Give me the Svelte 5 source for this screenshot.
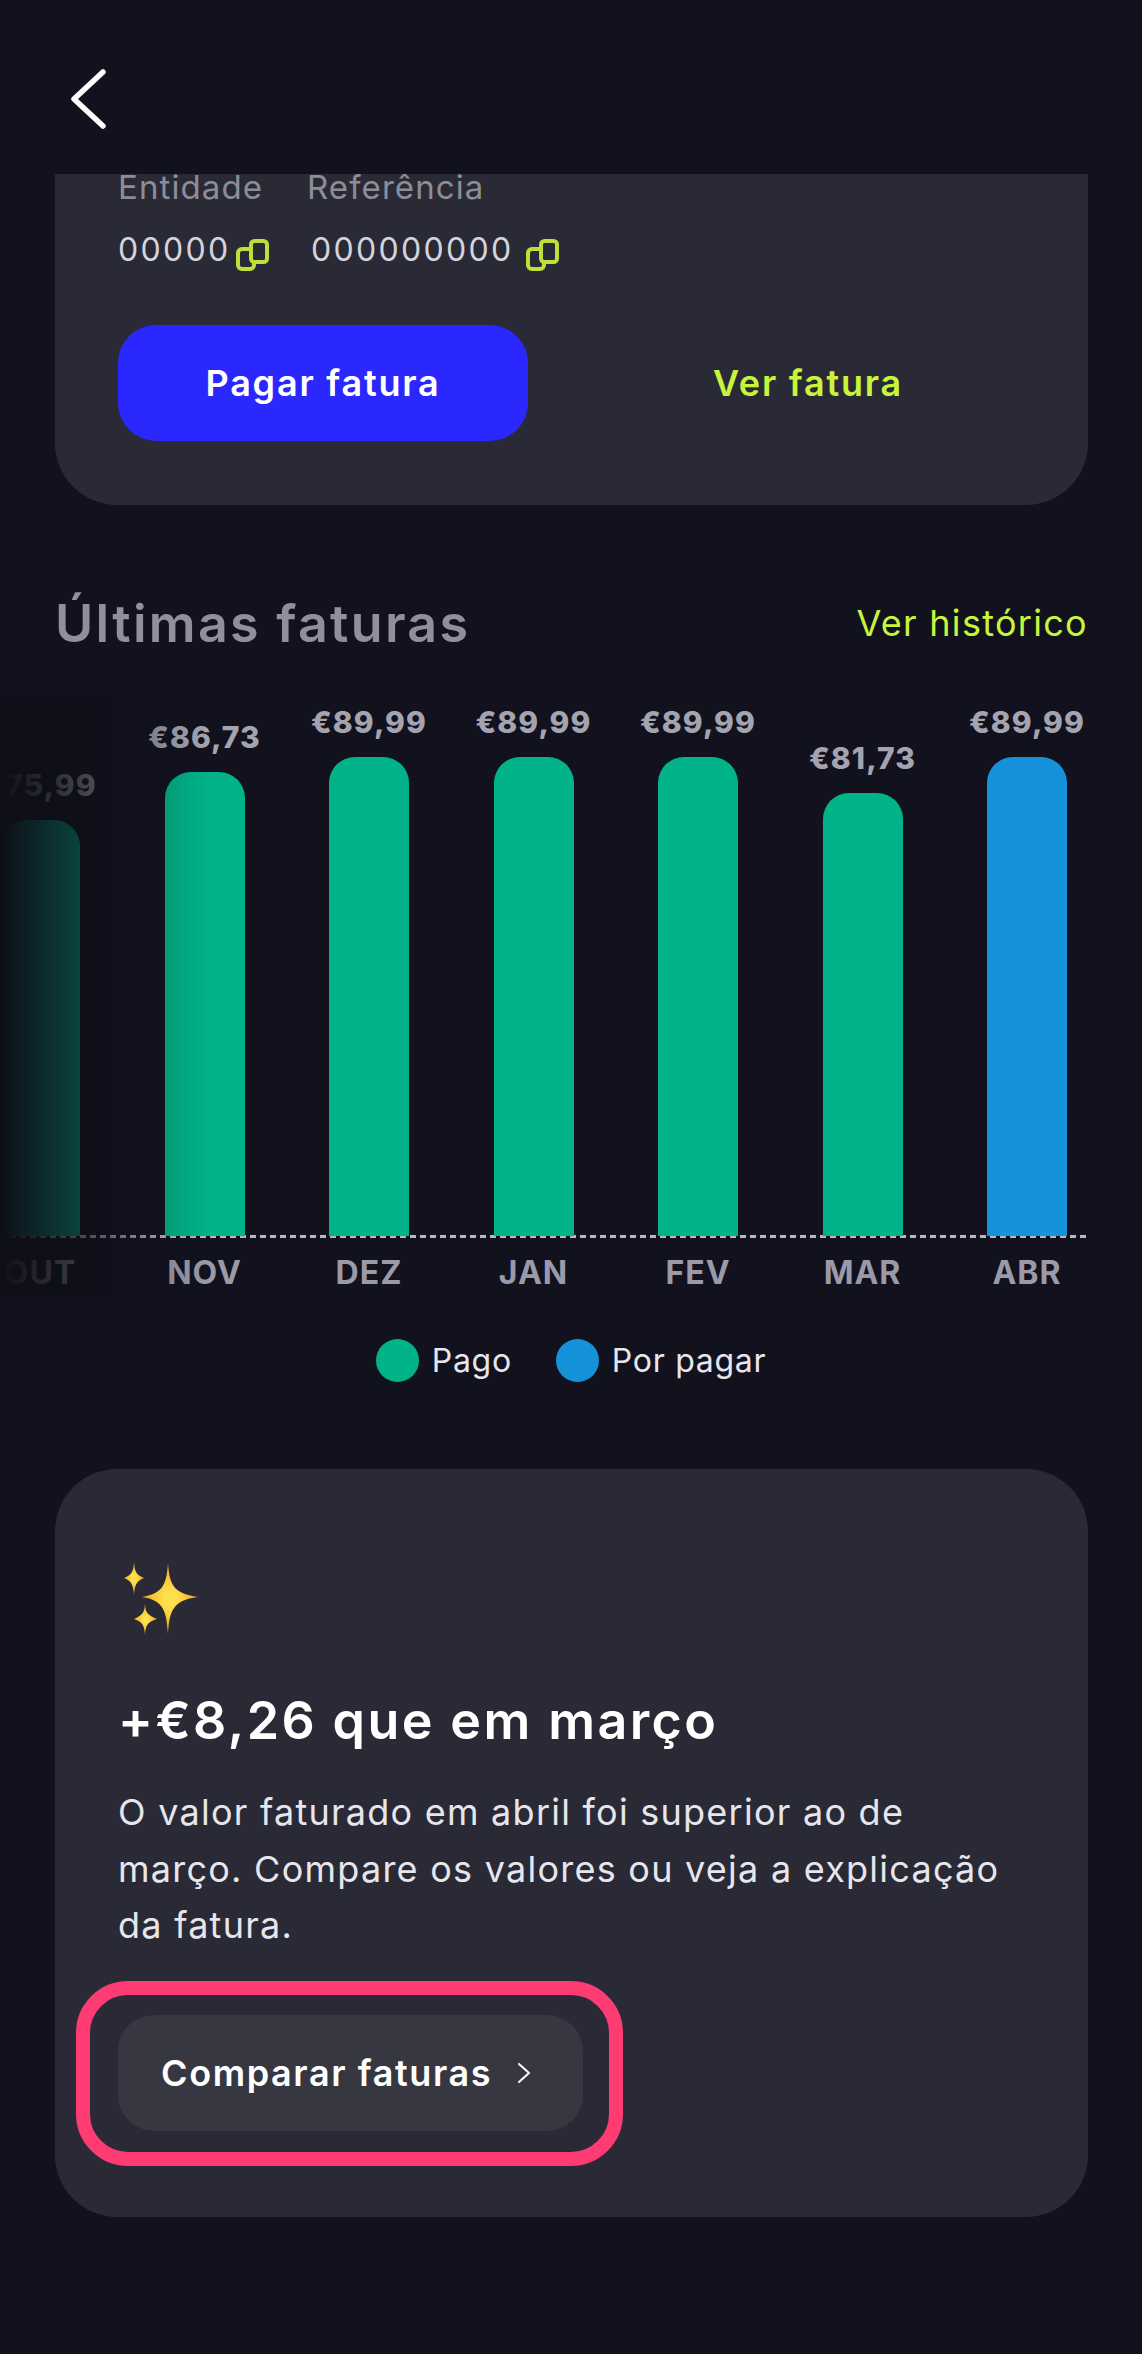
<script>
  const bars = [
    { month: "OUT", value: "€75,99", height: 416, kind: "paid" },
    { month: "NOV", value: "€86,73", height: 464, kind: "paid" },
    { month: "DEZ", value: "€89,99", height: 479, kind: "paid" },
    { month: "JAN", value: "€89,99", height: 479, kind: "paid" },
    { month: "FEV", value: "€89,99", height: 479, kind: "paid" },
    { month: "MAR", value: "€81,73", height: 443, kind: "paid" },
    { month: "ABR", value: "€89,99", height: 479, kind: "due" },
  ];

  const payment = [
    { label: "Entidade", value: "00000" },
    { label: "Referência", value: "000000000" },
  ];
</script>

<div class="page">
  <header class="top">
    <svg class="back" viewBox="0 0 36 60" width="36" height="60" fill="none">
      <path d="M33 3 4 30l29 27" stroke="#fff" stroke-width="5.5" stroke-linecap="round" stroke-linejoin="round" />
    </svg>
  </header>

  <section class="card pay">
    <div class="refs">
      {#each payment as item}
        <div class="ref">
          <span class="ref-label">{item.label}</span>
          <span class="ref-value">
            {item.value}
            <svg viewBox="0 0 33 32" width="33" height="32" fill="none" stroke="#bfe03a" stroke-width="4">
              <rect x="15" y="2" width="16" height="21" rx="3.5" />
              <path d="M15 10H6a4 4 0 0 0-4 4v12a4 4 0 0 0 4 4h8a4 4 0 0 0 4-4v-3" />
            </svg>
          </span>
        </div>
      {/each}
    </div>
    <div class="actions">
      <button class="primary">Pagar fatura</button>
      <button class="ghost">Ver fatura</button>
    </div>
  </section>

  <div class="section-head">
    <h2>Últimas faturas</h2>
    <span class="link">Ver histórico</span>
  </div>

  <section class="chart">
    <div class="bars">
      {#each bars as bar}
        <div class="col">
          <span class="amount">{bar.value}</span>
          <div class="bar {bar.kind}" style="height: {bar.height}px"></div>
        </div>
      {/each}
    </div>
    <div class="axis"></div>
    <div class="months">
      {#each bars as bar}
        <span class="month">{bar.month}</span>
      {/each}
    </div>
    <div class="fade"></div>
  </section>

  <div class="legend">
    <span class="dot paid"></span>
    <span class="legend-text">Pago</span>
    <span class="dot due"></span>
    <span class="legend-text">Por pagar</span>
  </div>

  <section class="card insight">
    <svg class="sparkles" viewBox="0 0 76 74" width="76" height="74">
      <defs>
        <radialGradient id="spark">
          <stop offset="0.2" stop-color="#ffe14d" />
          <stop offset="1" stop-color="#f5a81c" />
        </radialGradient>
      </defs>
      <path fill="url(#spark)" d="M45 1c1.500 20 4 30.500 30 34C49 38 46.500 50 45 72 43.500 50 41 38 19 35 41 31.500 43.500 21 45 1Z" />
      <path fill="url(#spark)" d="M11 0c.6 9 2 13 10 16-8 3-9.400 8-10 17-.6-9-2-14-10-17 8-3 9.400-7 10-16Z" />
      <path fill="url(#spark)" d="M22 42c.6 8 2 11 12 15-10 3-11.400 7-12 16-.6-9-2-13-11-16 9-4 10.400-7 11-15Z" />
    </svg>
    <h3>+€8,26 que em março</h3>
    <p>O valor faturado em abril foi superior ao de março. Compare os valores ou veja a explicação da fatura.</p>
    <div class="cta-wrap">
      <button class="cta">
        Comparar faturas
        <svg viewBox="0 0 14 22" width="14" height="22" fill="none">
          <path d="m2 2 10 9-10 9" stroke="#fff" stroke-width="2" stroke-linecap="round" stroke-linejoin="round" />
        </svg>
      </button>
      <div class="highlight"></div>
    </div>
  </section>
</div>

<style>
  :global(body) {
    margin: 0;
    background: #12121f;
  }

  .page {
    width: 1142px;
    height: 2354px;
    overflow: hidden;
    background: #12121f;
    font-family: Inter, "Liberation Sans", sans-serif;
    color: #fff;
  }

  .top {
    height: 174px;
    padding: 69px 0 0 70px;
    box-sizing: border-box;
  }

  .back {
    display: block;
  }

  .card {
    margin: 0 54px 0 55px;
    background: #2a2a36;
  }

  .pay {
    height: 331px;
    box-sizing: border-box;
    padding: 0 0 0 63px;
    border-radius: 0 0 62px 62px;
  }

  .refs {
    display: flex;
    gap: 46px;
  }

  .ref {
    display: flex;
    flex-direction: column;
    width: 143px;
  }

  .ref:last-child .ref-value {
    margin-left: 4px;
    gap: 13px;
  }

  .ref-label {
    font-size: 33px;
    line-height: 26px;
    height: 26px;
    letter-spacing: 1.100px;
    white-space: nowrap;
    color: #8d8d98;
  }

  .ref-value {
    display: flex;
    align-items: flex-start;
    gap: 6px;
    margin-top: 31px;
    font-size: 32px;
    line-height: 38px;
    letter-spacing: 2.300px;
    color: #d4d4dc;
  }

  .ref-value svg {
    margin-top: 8px;
    flex: none;
  }

  .actions {
    display: flex;
    align-items: center;
    margin-top: 54px;
  }

  button {
    font-family: inherit;
    border: none;
    cursor: pointer;
  }

  .primary {
    width: 410px;
    height: 116px;
    border-radius: 38px;
    background: #2b27ff;
    color: #fff;
    font-size: 36px;
    font-weight: 600;
    letter-spacing: 1.800px;
  }

  .ghost {
    flex: 1;
    background: none;
    color: #c8f53c;
    font-size: 36px;
    font-weight: 600;
    letter-spacing: 1.800px;
  }

  .section-head {
    display: flex;
    justify-content: space-between;
    align-items: center;
    margin: 86px 54px 0 55px;
    height: 64px;
  }

  h2 {
    margin: 0;
    font-size: 52px;
    font-weight: 600;
    letter-spacing: 2.300px;
    color: #8f8f9e;
  }

  .link {
    font-size: 36px;
    letter-spacing: 1.300px;
    color: #c8f53c;
  }

  .chart {
    position: relative;
    margin-top: 41px;
    width: 1088px;
  }

  .bars {
    display: flex;
    align-items: flex-end;
    gap: 84.500px;
    height: 540px;
  }

  .col {
    width: 80px;
    display: flex;
    flex-direction: column;
    align-items: center;
  }

  .amount {
    white-space: nowrap;
    font-size: 30px;
    line-height: 36px;
    font-weight: 800;
    letter-spacing: 1.100px;
    color: #a4a4b1;
    margin-bottom: 17px;
  }

  .bar {
    width: 80px;
    border-radius: 26px 26px 0 0;
  }

  .paid {
    background: #00b388;
  }

  .due {
    background: #1592d9;
  }

  .axis {
    height: 3px;
    margin-top: -1px;
    background: repeating-linear-gradient(90deg, #b8b8c4 0 6px, transparent 6px 10px);
  }

  .months {
    display: flex;
    gap: 84.500px;
    margin-top: 17px;
  }

  .month {
    width: 80px;
    display: flex;
    justify-content: center;
    font-size: 32px;
    line-height: 36px;
    font-weight: 700;
    letter-spacing: 1px;
    color: #9a9aa8;
  }

  .fade {
    position: absolute;
    left: 0;
    top: 0;
    bottom: -6px;
    width: 210px;
    background: linear-gradient(90deg, #0e0e18 0, rgba(14, 14, 24, 0.68) 80px, rgba(14, 14, 24, 0.12) 170px, rgba(14, 14, 24, 0) 100%);
  }

  .legend {
    display: flex;
    align-items: center;
    justify-content: center;
    margin-top: 47px;
    height: 44px;
    font-size: 32px;
    letter-spacing: 0.700px;
    color: #e6e6ec;
  }

  .dot {
    width: 43px;
    height: 43px;
    border-radius: 50%;
    margin-right: 13px;
  }

  .legend-text {
    margin-right: 44px;
  }

  .legend-text:last-child {
    margin-right: 0;
  }

  .insight {
    margin-top: 87px;
    height: 748px;
    box-sizing: border-box;
    padding: 93px 63px 0;
    border-radius: 62px;
  }

  .sparkles {
    display: block;
    margin-left: 5px;
  }

  h3 {
    margin: 55px 0 0;
    font-size: 52px;
    line-height: 60px;
    font-weight: 600;
    letter-spacing: 2.400px;
  }

  p {
    margin: 33px 0 0;
    font-size: 36px;
    line-height: 56.500px;
    letter-spacing: 1.250px;
    color: #e6e6ec;
  }

  .cta-wrap {
    position: relative;
    display: inline-block;
    margin-top: 61px;
  }

  .cta {
    display: flex;
    align-items: center;
    gap: 25px;
    width: 465px;
    height: 116px;
    box-sizing: border-box;
    padding: 0 0 0 43px;
    border-radius: 36px;
    background: #373742;
    color: #fff;
    font-size: 36px;
    font-weight: 600;
    letter-spacing: 1.600px;
  }

  .highlight {
    position: absolute;
    inset: -34px -40px -35px -42px;
    border: 14px solid #ff3b73;
    border-radius: 52px;
  }
</style>
